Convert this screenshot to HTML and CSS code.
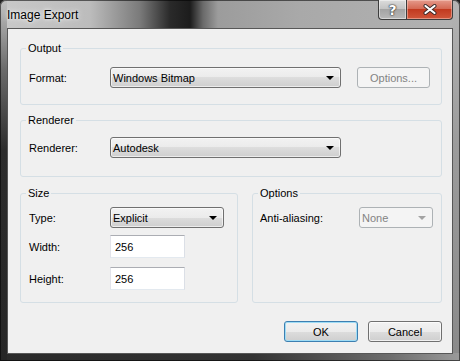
FILE: index.html
```html
<!DOCTYPE html>
<html lang="en">
<head>
    <meta charset="UTF-8">
    <title>Image Export</title>
    <link rel="stylesheet" href="styles.css">
</head>
<body>
<div class="window">
    <div class="titlebar">
        <span class="title">Image Export</span>
        <div class="caption">
            <button class="cap help"><span class="glyph">?</span></button>
            <button class="cap close">
                <svg width="14" height="11" viewBox="0 0 14 11">
                    <path d="M2.5 2 L11.5 9 M11.5 2 L2.5 9" stroke="#3a2a28" stroke-width="4" stroke-linecap="round"/>
                    <path d="M2.5 2 L11.5 9 M11.5 2 L2.5 9" stroke="#fff" stroke-width="2.2" stroke-linecap="round"/>
                </svg>
            </button>
        </div>
    </div>

    <div class="client">
        <fieldset class="group group-output">
            <legend>Output</legend>
            <div class="row">
                <label class="lbl">Format:</label>
                <div class="combo combo-wide">Windows Bitmap<span class="arrow"></span></div>
                <button class="btn btn-options" disabled>Options...</button>
            </div>
        </fieldset>

        <fieldset class="group group-renderer">
            <legend>Renderer</legend>
            <div class="row">
                <label class="lbl">Renderer:</label>
                <div class="combo combo-wide">Autodesk<span class="arrow"></span></div>
            </div>
        </fieldset>

        <div class="pair">
            <fieldset class="group group-size">
                <legend>Size</legend>
                <div class="row row-type">
                    <label class="lbl">Type:</label>
                    <div class="combo combo-type">Explicit<span class="arrow"></span></div>
                </div>
                <div class="row row-width">
                    <label class="lbl">Width:</label>
                    <input class="field" type="text" value="256">
                </div>
                <div class="row row-height">
                    <label class="lbl">Height:</label>
                    <input class="field" type="text" value="256">
                </div>
            </fieldset>

            <fieldset class="group group-options">
                <legend>Options</legend>
                <div class="row row-type">
                    <label class="lbl lbl-long">Anti-aliasing:</label>
                    <div class="combo combo-small disabled">None<span class="arrow"></span></div>
                </div>
            </fieldset>
        </div>

        <div class="actions">
            <button class="btn btn-default">OK</button>
            <button class="btn">Cancel</button>
        </div>
    </div>
</div>
</body>
</html>
```

FILE: styles.css
```css
* {
    box-sizing: border-box;
}

body {
    margin: 0;
    background: #222;
    font-family: "Liberation Sans", Arial, sans-serif;
    font-size: 11px;
    color: #000;
}

.window {
    width: 460px;
    height: 361px;
    padding: 0 7px 7px 7px;

    display: flex;
    flex-direction: column;

    border-radius: 6px 6px 0 0;
    box-shadow: inset 0 0 0 1px rgba(0, 0, 0, .55);
    background:
        linear-gradient(to bottom, #c2c2c2 0, #6a6a6a 70px, #2c2c2c 150px, #262626 100%) left / 7px 100% no-repeat,
        linear-gradient(90deg, #2a2a2a 0, #333 55%, #6e6e6e 85%, #9a9a9a 100%) bottom / 100% 8px no-repeat,
        linear-gradient(to bottom, #b4b4b4 0, #9c9c9c 40%, #8a8a8a 100%) right / 8px 100% no-repeat,
        linear-gradient(90deg, #c9c9c9 0, #bcbcbc 90px, #7a7a7a 140px, #2a2a2a 170px, #1c1c1c 190px, #6a6a6a 203px, #9c9c9c 218px, #a9a9a9 300px, #b2b2b2 100%);
}

.titlebar {
    height: 28px;
    display: flex;
    align-items: flex-start;
}

.title {
    margin-top: 8px;
    font-size: 12px;
    line-height: 14px;
    text-shadow: 0 0 6px rgba(255, 255, 255, .9), 0 0 3px rgba(255, 255, 255, .8);
}

.caption {
    margin-left: auto;
    display: flex;
}

.cap {
    height: 20px;
    padding: 0;
    margin: 0;

    display: flex;
    align-items: center;
    justify-content: center;

    border: 1px solid #3d3d3d;
    border-top: 0;
}

.help {
    width: 28px;
    border-right: 0;
    border-radius: 0 0 0 4px;
    background: linear-gradient(to bottom, #dcdcdc 0, #c4c4c4 45%, #a4a4a4 50%, #b8b8b8 100%);
    box-shadow: inset 0 0 0 1px rgba(255, 255, 255, .45);
}

.help .glyph {
    font-family: "DejaVu Sans", sans-serif;
    font-size: 14px;
    font-weight: bold;
    line-height: 14px;
    color: #fff;
    text-shadow: 0 0 1px #333, 0 0 1px #333, 0 0 2px #333;
}

.close {
    width: 47px;
    border-radius: 0 0 4px 0;
    background: linear-gradient(to bottom, #e59a8b 0, #d56a55 45%, #c23a20 50%, #d0563a 100%);
    box-shadow: inset 0 0 0 1px rgba(255, 220, 210, .45);
}

.client {
    flex: 1;
    padding: 12px 10px 0 12px;

    display: flex;
    flex-direction: column;

    background: #f0f0f0;
    border: 1px solid #575757;
}

.group {
    margin: 0;
    padding: 0;
    min-width: 0;

    border: 1px solid #d5dfe5;
    border-radius: 3px;
}

.group legend {
    margin-left: 5px;
    padding: 0 2px;
    line-height: 14px;
}

.group-output {
    padding-bottom: 16px;
}

.group-output .row {
    margin-top: 12px;
}

.group-renderer {
    margin-top: 8px;
    padding-bottom: 18px;
}

.group-renderer .row {
    margin-top: 10px;
}

.pair {
    margin-top: 9px;
    display: flex;
    gap: 14px;
}

.group-size {
    width: 218px;
    padding-bottom: 12px;
}

.group-options {
    width: 190px;
}

.row {
    display: flex;
    align-items: center;
    padding-left: 8px;
}

.group-options .row {
    padding-left: 7px;
}

.row-type {
    margin-top: 7px;
}

.row-width {
    margin-top: 7px;
}

.row-height {
    margin-top: 9px;
}

.lbl {
    width: 81px;
    flex: none;
}

.lbl-long {
    width: 99px;
}

.combo {
    height: 21px;
    padding: 0 6px 0 2px;

    display: flex;
    align-items: center;

    border: 1px solid #707070;
    border-radius: 3px;
    background: linear-gradient(to bottom, #f2f2f2 0, #ebebeb 50%, #dddddd 50%, #cfcfcf 100%);
    box-shadow: inset 0 0 0 1px rgba(255, 255, 255, .6);
}

.combo .arrow {
    margin-left: auto;
    width: 0;
    height: 0;

    border-left: 4px solid transparent;
    border-right: 4px solid transparent;
    border-top: 4px solid #000;
}

.combo-wide {
    width: 231px;
}

.combo-type {
    width: 114px;
}

.combo-small {
    width: 74px;
}

.combo.disabled {
    color: #838383;
    border-color: #adb2b5;
    background: #f4f4f4;
    box-shadow: none;
}

.combo.disabled .arrow {
    border-top-color: #a3a3a3;
}

.field {
    width: 75px;
    height: 23px;
    padding: 0 4px;
    margin: 0;

    font: inherit;
    color: #000;

    border: 1px solid;
    border-color: #abadb3 #dbdfe6 #e3e9ef #e2e3ea;
    background: #fff;
    outline: none;
}

.btn {
    width: 74px;
    height: 21px;
    padding: 0;
    margin: 0;

    font: inherit;
    color: #000;

    border: 1px solid #707070;
    border-radius: 3px;
    background: linear-gradient(to bottom, #f2f2f2 0, #ebebeb 50%, #dddddd 50%, #cfcfcf 100%);
    box-shadow: inset 0 0 0 1px rgba(255, 255, 255, .7);
}

.btn-options {
    width: 73px;
    margin-left: 16px;

    color: #838383;
    border-color: #adb2b5;
    background: #f4f4f4;
    box-shadow: none;
}

.btn-default {
    border-color: #3c7fb1;
    box-shadow: inset 0 0 0 1px #9fdcf5;
}

.actions {
    margin-top: 18px;
    display: flex;
    justify-content: flex-end;
    gap: 10px;
}
```
